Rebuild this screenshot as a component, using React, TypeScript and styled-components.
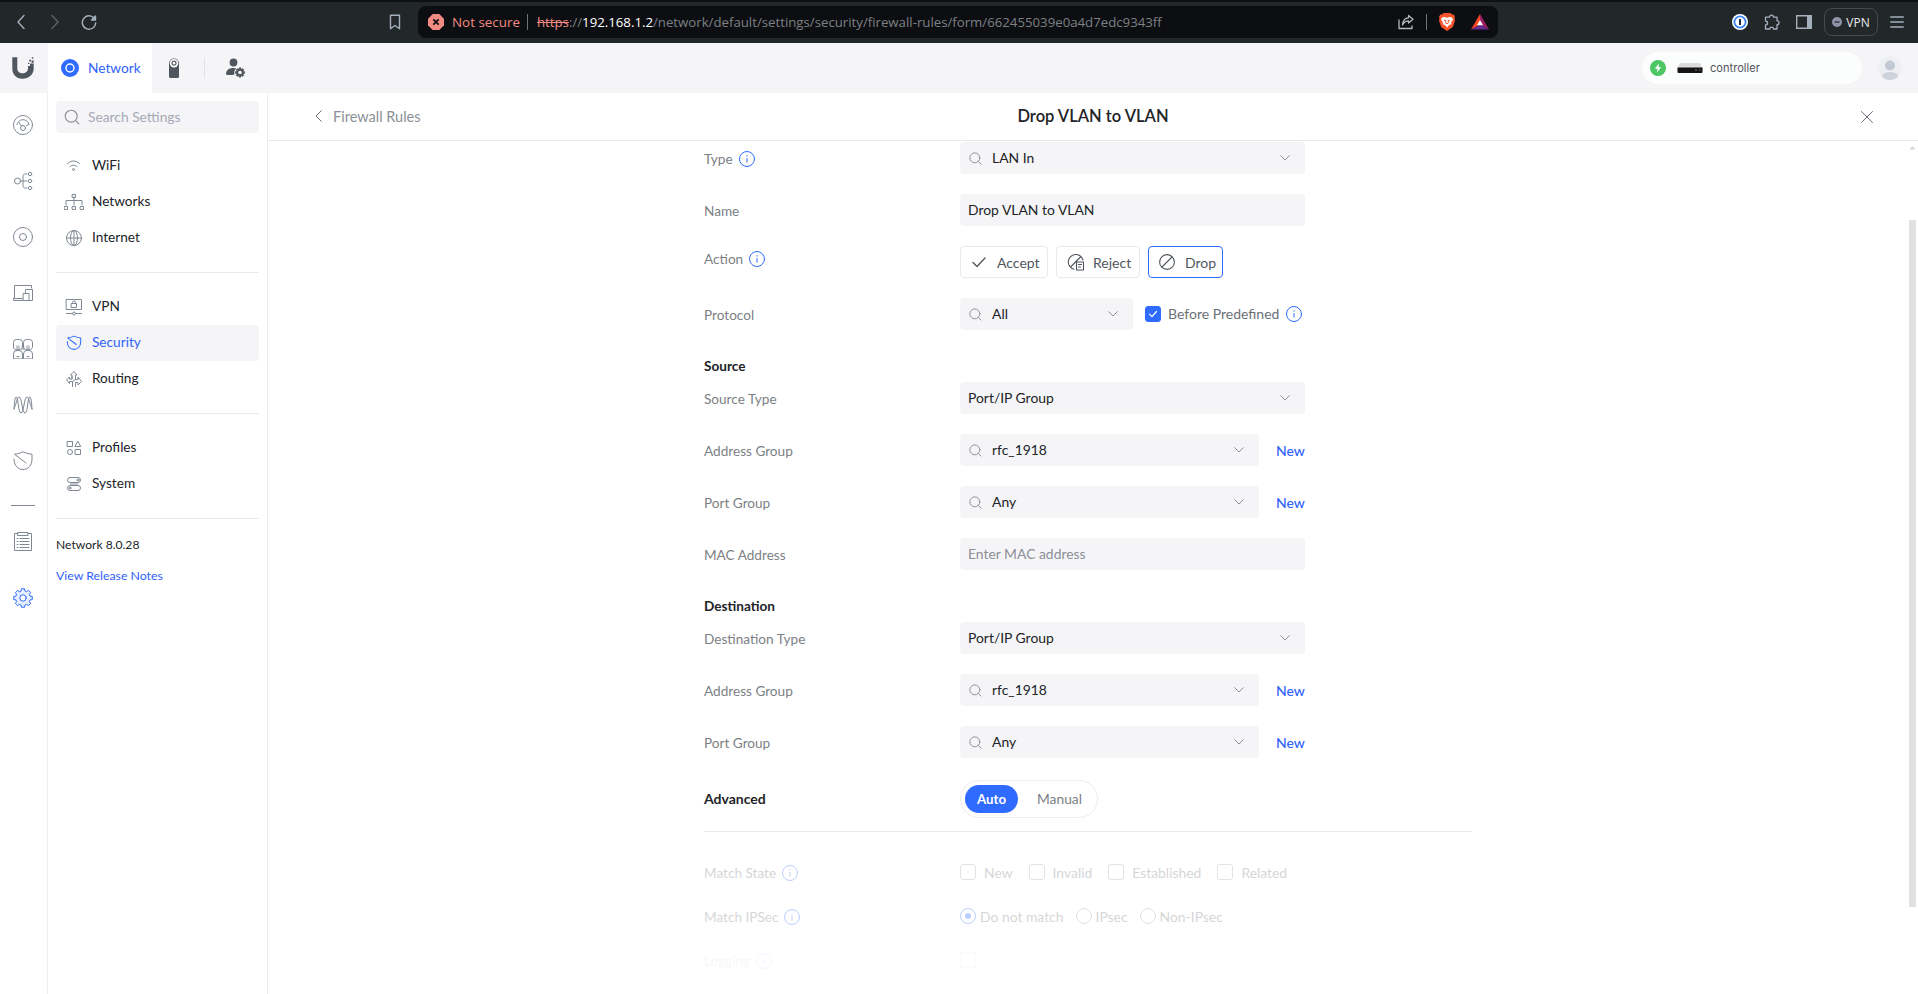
import React from 'react';
import styled, { createGlobalStyle, css } from 'styled-components';

const Global = createGlobalStyle`
  *, *::before, *::after { box-sizing: border-box; }
  html, body { margin: 0; height: 100%; overflow: hidden; background: #fff; }
  body { font-family: Lato, "Liberation Sans", sans-serif; font-size: 14px; color: #212327; }
  button { font: inherit; }
  svg { display: block; flex: none; }
`;

const Page = styled.div`
  width: 1918px;
  height: 994px;
  display: flex;
  flex-direction: column;
  overflow: hidden;
`;

/* Browser chrome */
const BrowserBar = styled.div`
  height: 43px;
  flex: none;
  display: flex;
  align-items: center;
  background: #22272a;
  border-top: 2px solid #0f1014;
  padding: 0 13px 1px 13px;
  font-family: "Open Sans", "Noto Sans", sans-serif;
  color: #a3b0bc;
`;
const NavGroup = styled.div`
  display: flex;
  align-items: center;
  gap: 18px;
  width: 390px;
  flex: none;
`;
const BookmarkSlot = styled.div`
  margin-left: auto;
  margin-right: 2px;
`;
const UrlBar = styled.div`
  width: 1080px;
  flex: none;
  height: 32px;
  margin-left: 15px;
  border-radius: 8px;
  background: #0d0e12;
  display: flex;
  align-items: center;
  padding: 0 9px 0 10px;
  font-size: 13.4px;
  white-space: nowrap;
`;
const NotSecure = styled.span`
  color: #f28b82;
  margin-left: 8px;
  padding-bottom: 1px;
  width: 68px;
`;
const UrlSep = styled.span<{ $ml: number; $mr: number }>`
  width: 1px;
  height: 16px;
  background: #6f7378;
  margin: 0 ${p => p.$mr}px 0 ${p => p.$ml}px;
`;
const UrlText = styled.span`
  color: #7d8085;
  font-size: 13.22px;
  padding-bottom: 1px;
  s { color: #f28b82; }
  b { color: #fff; font-weight: 400; }
`;
const UrlActions = styled.div`
  margin-left: auto;
  display: flex;
  align-items: center;
`;
const BatIcon = styled.svg`
  margin-left: 16px;
`;
const Extensions = styled.div`
  margin-left: auto;
  display: flex;
  align-items: center;
`;
const ExtensionIcons = styled.div`
  display: flex;
  align-items: center;
  gap: 16px;
`;
const VpnButton = styled.div`
  width: 54px;
  height: 28px;
  margin: 0 12px 0 12px;
  border: 1px solid #454a4f;
  border-radius: 8px;
  display: flex;
  align-items: center;
  justify-content: center;
  gap: 4px;
  font-size: 12px;
  color: #e8eaed;
`;

/* App header */
const AppHeader = styled.header`
  height: 50px;
  flex: none;
  display: flex;
  align-items: center;
  background: #f5f5f8;
`;
const LogoSlot = styled.div`
  width: 48px;
  padding-left: 11px;
`;
const AppTab = styled.div`
  width: 104px;
  height: 50px;
  background: #fff;
  display: flex;
  align-items: center;
  padding-left: 13px;
  gap: 9px;
  font-size: 13.7px;
  color: #2f62fb;
`;
const ConsoleIcon = styled.svg`
  margin-left: 16px;
`;
const HeaderSep = styled.span`
  width: 1px;
  height: 20px;
  background: #e2e2e8;
  margin: 0 21px 0 24px;
`;
const ConsolePill = styled.div`
  margin-left: auto;
  width: 220px;
  height: 32px;
  border-radius: 16px;
  background: #fcfdfd;
  display: flex;
  align-items: center;
  padding-left: 8px;
  font-family: Inter, sans-serif;
  font-size: 11.1px;
  color: #50565e;
`;
const GatewayIcon = styled.svg`
  margin-left: 11px;
`;
const ConsoleName = styled.span`
  margin-left: 7px;
`;
const AvatarSlot = styled.div`
  margin: 0 16px;
`;

/* Body */
const Body = styled.div`
  flex: 1;
  display: flex;
  min-height: 0;
`;
const Rail = styled.nav`
  width: 48px;
  border-right: 1px solid #ededf0;
  display: flex;
  flex-direction: column;
  align-items: center;
  padding: 22px 1px 0 0;
  gap: 36px;
  color: #808893;
`;
const RailSep = styled.span`
  width: 24px;
  height: 1px;
  background: #808893;
  margin: -2px 0 -10px;
`;
const Sidebar = styled.aside`
  width: 220px;
  border-right: 1px solid #ededf0;
  padding: 8px 8px 0 8px;
`;
const ItemText = styled.span`
  padding-bottom: 1.5px;
`;
const SearchBox = styled.div`
  height: 32px;
  border-radius: 4px;
  background: #f5f5f8;
  display: flex;
  align-items: center;
  gap: 7px;
  padding-left: 7px;
  color: #a5a9b5;
  margin-bottom: 15px;
  font-size: 13.8px;
`;
const MenuGroup = styled.div`
  padding-bottom: 16px;
  margin-bottom: 16px;
  border-bottom: 1px solid #e9e9ed;
`;
const MenuItem = styled.div<{ $active?: boolean }>`
  height: 36px;
  border-radius: 4px;
  display: flex;
  align-items: center;
  gap: 8px;
  padding-left: 8px;
  font-size: 13.65px;
  ${p => p.$active && css`background: #f5f5f8; color: #2f62fb;`}
  svg { color: ${p => (p.$active ? '#2f6bff' : '#808893')}; }
`;
const VersionText = styled.div`
  font-size: 12.1px;
  line-height: 16px;
  padding-top: 2px;
`;
const ReleaseLink = styled.a`
  display: block;
  margin-top: 15px;
  font-size: 12.3px;
  line-height: 16px;
  color: #2f62fb;
`;

const Main = styled.main`
  flex: 1;
  display: flex;
  flex-direction: column;
  min-width: 0;
`;
const MainHeader = styled.div`
  height: 48px;
  flex: none;
  border-bottom: 1px solid #e9e9ed;
  display: grid;
  grid-template-columns: 1fr auto 1fr;
  align-items: center;
  padding: 0 45px;
`;
const BackLink = styled.a`
  display: flex;
  align-items: center;
  gap: 11px;
  color: #8b8f97;
  font-size: 14.5px;
  padding: 0 0 1px 2px;
`;
const Title = styled.h1`
  margin: 0;
  padding-bottom: 1px;
  font-size: 16.5px;
  font-weight: 600;
`;
const CloseSlot = styled.div`
  justify-self: end;
  color: #70757d;
`;
const ScrollArea = styled.div`
  flex: 1;
  min-height: 0;
  display: flex;
`;
const FormPane = styled.div`
  flex: 1;
  display: flex;
  justify-content: center;
  overflow: hidden;
`;
const Form = styled.div`
  width: 768px;
  padding-top: 1px;
`;
const ScrollTrack = styled.div`
  width: 10px;
  padding: 5px 0 0 1px;
  display: flex;
  flex-direction: column;
  align-items: flex-start;
`;
const ScrollThumb = styled.div`
  width: 7px;
  height: 687px;
  margin-top: 70px;
  background: #e1e1e1;
`;

const Row = styled.div<{ $gap?: number }>`
  display: flex;
  height: 32px;
  margin-bottom: ${p => p.$gap ?? 20}px;
`;
const Label = styled.div<{ $top?: number; $bottom?: number }>`
  width: 256px;
  display: flex;
  align-items: center;
  gap: 6px;
  color: #7c7f85;
  font-size: 13.6px;
  padding-top: ${p => p.$top ?? 2}px;
  padding-bottom: ${p => p.$bottom ?? 0}px;
`;
const Field = styled.div<{ $w?: number }>`
  width: ${p => p.$w ?? 345}px;
  height: 32px;
  border-radius: 4px;
  background: #f5f5f8;
  display: flex;
  align-items: center;
  padding: 0 15px 0 8px;
`;
const FieldValue = styled.span<{ $placeholder?: boolean; $icon?: boolean }>`
  flex: 1;
  margin-left: ${p => (p.$icon ? 9 : 0)}px;
  padding-bottom: 2px;
  font-size: 13.9px;
  color: ${p => (p.$placeholder ? '#8b8f97' : '#212327')};
`;
const NewLink = styled.a`
  margin-left: 17px;
  align-self: center;
  color: #2f62fb;
  font-weight: 500;
`;
const SectionTitle = styled.div`
  height: 16px;
  line-height: 16px;
  margin: 28px 0 8px;
  font-weight: 700;
  font-size: 13.6px;
`;
const ActionButton = styled.button<{ $w: number; $active?: boolean }>`
  width: ${p => p.$w}px;
  height: 32px;
  margin-right: 8px;
  padding: 0 0 0 10px;
  border: 1px solid ${p => (p.$active ? '#2f6bff' : '#e9e9ed')};
  border-radius: 4px;
  background: #fff;
  color: #50565e;
  display: flex;
  align-items: center;
  gap: ${p => (p.$w === 84 ? 8 : 10)}px;
`;
const Before = styled.div`
  display: flex;
  align-items: center;
  margin-left: 12px;
  color: #6a6f77;
  padding-bottom: 1px;
  gap: 7px;
`;
const CheckBox = styled.span<{ $on?: boolean }>`
  width: 16px;
  height: 16px;
  flex: none;
  border-radius: 3px;
  border: 1px solid ${p => (p.$on ? '#2f6bff' : '#a5a9b0')};
  background: ${p => (p.$on ? '#2f6bff' : '#fff')};
  display: flex;
  align-items: center;
  justify-content: center;
`;
const AdvancedRow = styled.div`
  display: flex;
  align-items: center;
  height: 52px;
  margin-top: 22px;
  padding-bottom: 14px;
  border-bottom: 1px solid #e9e9ed;
`;
const AdvancedLabel = styled.div`
  width: 256px;
  font-weight: 700;
  font-size: 14px;
`;
const Segmented = styled.div`
  width: 138px;
  height: 38px;
  border: 1px solid #ededf0;
  border-radius: 19px;
  display: flex;
  align-items: center;
  padding-left: 4px;
`;
const Segment = styled.span<{ $on?: boolean }>`
  width: ${p => (p.$on ? 53 : 79)}px;
  flex: none;
  height: 28px;
  border-radius: 14px;
  display: flex;
  align-items: center;
  justify-content: center;
  padding-left: ${p => (p.$on ? 0 : 4)}px;
  color: ${p => (p.$on ? '#fff' : '#7c7f85')};
  background: ${p => (p.$on ? '#2f6bff' : 'transparent')};
  font-size: ${p => (p.$on ? 13.3 : 13.8)}px;
  font-weight: ${p => (p.$on ? 700 : 400)};
`;
const Disabled = styled.div<{ $o: number }>`
  height: 44px;
  display: flex;
  align-items: center;
  opacity: ${p => p.$o};
`;
const DisabledGroup = styled.div`
  padding-top: 18px;
`;
const Options = styled.div<{ $gap: number }>`
  display: flex;
  align-items: center;
  gap: ${p => p.$gap}px;
  color: #7c7f85;
  font-size: 13.9px;
`;
const Option = styled.span<{ $gap: number }>`
  display: flex;
  align-items: center;
  gap: ${p => p.$gap}px;
`;
const Radio = styled.span<{ $on?: boolean }>`
  width: 16px;
  height: 16px;
  border-radius: 50%;
  border: 1px solid ${p => (p.$on ? '#2f6bff' : '#a5a9b0')};
  display: flex;
  align-items: center;
  justify-content: center;
  &::after {
    content: '';
    width: 6px;
    height: 6px;
    border-radius: 50%;
    background: ${p => (p.$on ? '#2f6bff' : 'transparent')};
  }
`;

type IconProps = { w?: number; h?: number; vb?: string; sw?: number; color?: string; children: React.ReactNode };
const Icon = ({ w = 20, h, vb, sw = 1, color, children }: IconProps) => (
  <svg width={w} height={h ?? w} viewBox={vb ?? `0 0 ${w} ${h ?? w}`} fill="none" stroke="currentColor"
    strokeWidth={sw} color={color} strokeLinecap="round" strokeLinejoin="round">{children}</svg>
);

const InfoIcon = () => (
  <Icon w={16} color="#2f6bff">
    <circle cx="8" cy="8" r="7.5" />
    <path d="M8 7v4.5" strokeLinecap="butt" />
    <circle cx="8" cy="4.9" r=".7" fill="currentColor" stroke="none" />
  </Icon>
);
const Magnifier = ({ size = 15 }: { size?: number }) => (
  <Icon w={size} vb="0 0 16 16" color="#8b8f97">
    <circle cx="7.3" cy="7.3" r="5.3" />
    <path d="M11.2 11.2 14 14" />
  </Icon>
);
const Chevron = () => (
  <Icon w={10} h={6} color="#8b8f97"><path d="M.7.7 5 5 9.3.7" /></Icon>
);
const Shield = ({ size = 20 }: { size?: number }) => (
  <Icon w={size} vb="0 0 20 20" sw={20 / size}>
    <path d="M1 8c0 6.500 4 10.500 9 10.500s9-4 9-10.500V3.200C15.500 3 12.500 2 10 .8 7.500 2 4.500 3 1.500 3.200L13 12" />
  </Icon>
);

const gearPath = (() => {
  const pts: string[] = [];
  const n = 8;
  for (let i = 0; i < n; i++) {
    const a = (i * 2 * Math.PI) / n;
    [[-0.27, 7.3], [-0.17, 9.4], [0.17, 9.4], [0.27, 7.3]].forEach(([d, r]) => {
      pts.push(`${(10 + r * Math.sin(a + d)).toFixed(2)} ${(10 - r * Math.cos(a + d)).toFixed(2)}`);
    });
  }
  return `M${pts.join('L')}Z`;
})();

const SelectField = ({ value, w, search = true }: { value: string; w?: number; search?: boolean }) => (
  <Field $w={w}>
    {search && <Magnifier />}
    <FieldValue $icon={search}>{value}</FieldValue>
    <Chevron />
  </Field>
);

const GroupRow = ({ label, value, last }: { label: string; value: string; last?: boolean }) => (
  <Row $gap={last ? 0 : 20}>
    <Label>{label}</Label>
    <SelectField value={value} w={299} />
    <NewLink>New</NewLink>
  </Row>
);

const Browser = () => (
  <BrowserBar>
    <NavGroup>
      <Icon w={16} sw={1.4}><path d="M11 1.500 5 8l6 6.500" /></Icon>
      <Icon w={16} sw={1.4} color="#5c6268"><path d="M5 1.500 11 8l-6 6.500" /></Icon>
      <Icon w={16} sw={1.4}>
        <path d="M14 5.500A6.700 6.700 0 1 0 14.700 9" /><path d="M14.500 2v4h-4z" fill="currentColor" />
      </Icon>
      <BookmarkSlot>
        <Icon w={12} h={16} sw={1.400}><path d="M1.500 1.200h9v13.500L6 11.500l-4.500 3.200z" /></Icon>
      </BookmarkSlot>
    </NavGroup>
    <UrlBar>
      <svg width="16" height="16" viewBox="0 0 16 16">
        <path d="M4.700 0h6.600L16 4.700v6.600L11.300 16H4.700L0 11.300V4.700z" fill="#f28b82" />
        <path d="M5.300 5.300l5.400 5.400M10.700 5.300l-5.400 5.400" stroke="#0d0e12" strokeWidth="1.700" />
      </svg>
      <NotSecure>Not secure</NotSecure>
      <UrlSep $ml={7} $mr={9} />
      <UrlText><s>https</s>://<b>192.168.1.2</b>/network/default/settings/security/firewall-rules/form/662455039e0a4d7edc9343ff</UrlText>
      <UrlActions>
        <Icon w={16} sw={1.3} color="#b4b8bc">
          <path d="M1 6v8.500h13V12M10.500 1.500 15 5.300l-4.500 3.700V6.800C8 6.800 5.800 8 4.500 11 4.800 6.500 7 4 10.500 3.800z" />
        </Icon>
        <UrlSep $ml={12} $mr={12} />
        <svg width="16" height="18" viewBox="0 0 16 18">
          <path d="M4.500 0h7l1.500 1.600 1.700-.2L16 4l-.6 1.500.6 2-2.200 6.500L8 18l-5.800-4L0 7.500l.6-2L0 4l1.300-2.600 1.700.2z" fill="#fb542b" />
          <path d="M3 4.500 5.500 4 8 4.800 10.500 4l2.500.5 1 2-2 3 .5 1.500L9.800 12.300 8 14.500l-1.800-2.200L3.500 11 4 9.500l-2-3z" fill="#fff" />
          <path d="M5 7l2 .8-.5 2L8 10.800l1.500-1L9 7.800l2-.8" fill="none" stroke="#fb542b" />
        </svg>
        <BatIcon width="18" height="16" viewBox="0 0 18 16">
          <path d="M9 0 0 15.500l9-5z" fill="#ff4724" /><path d="M9 0l9 15.500-9-5z" fill="#9e1f63" />
          <path d="M0 15.500h18l-9-5z" fill="#662d91" /><path d="M9 6l3 5.200H6z" fill="#fff" />
        </BatIcon>
      </UrlActions>
    </UrlBar>
    <Extensions>
      <ExtensionIcons>
        <svg width="16" height="16" viewBox="0 0 16 16">
          <circle cx="8" cy="8" r="8" fill="#fff" /><circle cx="8" cy="8" r="5.600" fill="#fff" stroke="#3b82f6" strokeWidth="1.800" />
          <path d="M8 5v6" stroke="#1a2b4a" strokeWidth="2" />
        </svg>
        <Icon w={16} sw={1.300} color="#a3b0bc">
          <path d="M1.500 3.200H5.500a2 2 0 0 1 4 0H13v3.500a2 2 0 0 1 0 4V15H9.500a1.800 1.800 0 0 0-3.600 0H1.500v-4a2 2 0 0 0 0-4z" />
        </Icon>
        <svg width="16" height="16" viewBox="0 0 16 16">
          <path d="M.7 1.700h14.600v12.600H.7z" fill="none" stroke="#a3b0bc" strokeWidth="1.400" /><path d="M11 1h5v14h-5z" fill="#a3b0bc" />
        </svg>
      </ExtensionIcons>
      <VpnButton>
        <svg width="10" height="10" viewBox="0 0 10 10"><circle cx="5" cy="5" r="5" fill="#8f92a8" /><path d="M2.500 5h5" stroke="#22272a" strokeWidth="1.200" /></svg>
        VPN
      </VpnButton>
      <Icon w={15} h={14} sw={1.300}><path d="M.7 2h12.600M.7 7h12.600M.7 12h12.600" /></Icon>
    </Extensions>
  </BrowserBar>
);

const Header = () => (
  <AppHeader>
    <LogoSlot>
      <svg width="24" height="24" viewBox="0 0 24 24" fill="#50565e">
        <path d="M1.300 1.300h5v11c0 3.200 2.200 5 5.200 5s5.500-1.800 5.500-5V10h2V7.500h3.700v5c0 6-4.700 10.200-11.200 10.200s-10.200-4.200-10.200-10.200z" />
        <path d="M17 6.800h1.300v1.300H17zM18.300 3.800h1.800v1.800h-1.800zM20.600 4.600h2.100v2.200h-2.100zM20.800 1.300h1.500v1.500h-1.500z" />
      </svg>
    </LogoSlot>
    <AppTab>
      <svg width="18" height="18" viewBox="0 0 18 18">
        <circle cx="9" cy="9" r="9" fill="#2f6bff" /><circle cx="9" cy="9" r="4" fill="none" stroke="#fff" strokeWidth="1.400" />
      </svg>
      <ItemText>Network</ItemText>
    </AppTab>
    <ConsoleIcon width="12" height="20" viewBox="0 0 12 20">
      <path d="M1 5.500a5 5 0 0 1 10 0V18.500q0 1.500-1.500 1.500h-7q-1.500 0-1.500-1.500z" fill="#50565e" />
      <circle cx="6" cy="5.200" r="4.200" fill="#fff" /><circle cx="6" cy="5.200" r="2" fill="none" stroke="#50565e" strokeWidth="1.200" />
    </ConsoleIcon>
    <HeaderSep />
    <svg width="20" height="20" viewBox="0 0 20 20" fill="#50565e">
      <circle cx="7.500" cy="4.500" r="3.900" /><path d="M0 16.500c0-4.500 3-6.500 7.500-6.500 1.200 0 2 .2 2.800.5A5.500 5.500 0 0 0 8.500 16.500q-4 1-8.500 0z" />
      <g transform="translate(9 9.500) scale(.5)"><path d={gearPath} stroke="#50565e" strokeWidth="1.500" /><circle cx="10" cy="10" r="3.600" fill="#f5f5f8" /></g>
    </svg>
    <ConsolePill>
      <svg width="16" height="16" viewBox="0 0 16 16"><circle cx="8" cy="8" r="8" fill="#4cc764" /><path d="M9 3.500 4.800 8.700h2.700L7 12.500l4.200-5.200H8.500z" fill="#fff" /></svg>
      <GatewayIcon width="26" height="12" viewBox="0 0 26 12">
        <path d="M3 1h20l2.500 5H.5z" fill="#dcdcdc" /><path d="M.5 5.500h25V10q0 1-1 1h-23q-1 0-1-1z" fill="#141414" /><path d="M18 8h2M22 8h1.500" stroke="#777" />
      </GatewayIcon>
      <ConsoleName>controller</ConsoleName>
    </ConsolePill>
    <AvatarSlot>
      <svg width="24" height="24" viewBox="0 0 24 24">
        <circle cx="12" cy="12" r="12" fill="#eeeff2" /><circle cx="12" cy="9.500" r="5" fill="#c3c9d4" />
        <path d="M3.500 20c1.500-3 4.500-4 8.500-4s7 1 8.500 4A12 12 0 0 1 12 24a12 12 0 0 1-8.500-4z" fill="#cdd2dc" />
      </svg>
    </AvatarSlot>
  </AppHeader>
);

const SideRail = () => (
  <Rail>
    <Icon><circle cx="10" cy="10" r="9.500" /><circle cx="10" cy="13" r="2.500" /><path d="M8.500 11 6 7.500M4 9.500c1-3.500 3.500-4.800 6-4.800s5 1.300 6 4.800l-2.500 1" /></Icon>
    <Icon><circle cx="4.500" cy="10" r="3" /><path d="M7.500 10H14M14 3h-1.500c-2 0-2.500 1-2.500 2.500v9c0 1.500.5 2.500 2.500 2.500H14" /><circle cx="17" cy="3" r="1.700" /><circle cx="17" cy="10" r="1.700" /><circle cx="17" cy="17" r="1.700" /></Icon>
    <Icon><circle cx="10" cy="10" r="9.500" /><circle cx="10" cy="10" r="3.500" /></Icon>
    <Icon><path d="M1.500 15V2.500h17V5M.5 15.500h9M.5 15.500v2h9M12.500 10V6.500h7v11h-3.500M10.500 10.500H16v7h-5.500z" /></Icon>
    <Icon>
      <path d="M3 6.500h4v4H3zM13 6.500h4v4h-4zM8.500 7h3v4h-3z" fill="#c4c8ce" stroke="none" />
      <path d="M.5 8.500V3.500a3 3 0 0 1 3-3h3a3 3 0 0 1 3 3V8.500l-2 2.200h-5zM10.500 8.500V3.500a3 3 0 0 1 3-3h3a3 3 0 0 1 3 3V8.500l-2 2.200h-5z" />
      <path d="M.5 19.500V15a3.500 3.500 0 0 1 3.500-3.500h2A3.500 3.500 0 0 1 9.500 15v4.500zM10.500 19.500V15a3.500 3.500 0 0 1 3.500-3.500h2a3.500 3.500 0 0 1 3.500 3.500v4.500zM4 17.500h2M14 17.500h2" />
    </Icon>
    <Icon><path d="M1 14C1.500 6 2 2 3.200 2 5.500 2 5 18 8 18s3-16 6-16c2 0 2 5 5 12M19 14c-.5-8-1-12-2.200-12-2.300 0-1.800 16-4.800 16S9 2 6 2C4 2 4 7 1 14" /></Icon>
    <Shield />
    <RailSep />
    <Icon><path d="M5 1.500H1.500v17h17v-17H15M5 .5h10v3H5zM4 6.500h1M7 6.500h9M4 9.500h1M7 9.500h9M4 12.500h1M7 12.500h9M4 15.500h1M7 15.500h9" /></Icon>
    <Icon color="#2f6bff"><path d={gearPath} fill="#e6eeff" /><circle cx="10" cy="10" r="3.200" fill="#fff" /></Icon>
  </Rail>
);

const SettingsMenu = () => (
  <Sidebar>
    <SearchBox><Magnifier size={18} /><ItemText>Search Settings</ItemText></SearchBox>
    <MenuGroup>
      <MenuItem><Icon><path d="M3.500 7.500q6-5.500 12 0M6 10.500q3.500-3 7 0" /><circle cx="9.500" cy="13.500" r="1" /></Icon><ItemText>WiFi</ItemText></MenuItem>
      <MenuItem><Icon><path d="M10 5v8M2 13V8.500h16V13" /><path d="M8.500 2.500h3v3h-3zM.5 14.500h3v3h-3zM8.500 14.500h3v3h-3zM16.500 14.500h3v3h-3z" /></Icon><ItemText>Networks</ItemText></MenuItem>
      <MenuItem><Icon><circle cx="10" cy="10" r="7.500" /><ellipse cx="10" cy="10" rx="3.500" ry="7.500" /><path d="M10 2.500v15M2.500 10h15" /></Icon><ItemText>Internet</ItemText></MenuItem>
    </MenuGroup>
    <MenuGroup>
      <MenuItem><Icon><path d="M2.500 2.500h15v10h-15zM2.500 16.500h5.500M12 16.500h5.500M7.500 6.500h5v4h-5zM8.500 6.500V5.500a1.500 1.500 0 0 1 3 0v1" /><circle cx="10" cy="16.500" r="1.500" /></Icon><ItemText>VPN</ItemText></MenuItem>
      <MenuItem $active><Icon><g transform="translate(2.500 2.500) scale(.75)" strokeWidth="1.400"><path d="M1 8c0 6.500 4 10.500 9 10.500s9-4 9-10.500V3.200C15.500 3 12.500 2 10 .8 7.500 2 4.500 3 1.500 3.200L13 12" /></g></Icon><ItemText>Security</ItemText></MenuItem>
      <MenuItem><Icon><path d="M8.500 17.500V12.500H5.500v2l-3-3.500 3-3v2h2.500V6H6.500L10 2.500 13 6h-1.500v4.500H14v-2.500l3.500 4.500-3.500 3.500v-2.500h-2.500v4M8 10v-2.500M11.500 10.500 8.500 12.500" /></Icon><ItemText>Routing</ItemText></MenuItem>
    </MenuGroup>
    <MenuGroup>
      <MenuItem><Icon><path d="M3.500 3.500h5v5h-5zM11.500 11.500h5v5h-5zM14 3.500l2.700 5h-5.400z" /><circle cx="6" cy="14" r="2.500" /></Icon><ItemText>Profiles</ItemText></MenuItem>
      <MenuItem><Icon><rect x="3.500" y="3.500" width="13" height="5" rx="2.500" /><rect x="3.500" y="11.500" width="13" height="5" rx="2.500" /><circle cx="14" cy="6" r="1" /><circle cx="6" cy="14" r="1" /><path d="M6 9h8v2H6z" fill="#c4c8ce" stroke="none" /></Icon><ItemText>System</ItemText></MenuItem>
    </MenuGroup>
    <VersionText>Network 8.0.28</VersionText>
    <ReleaseLink>View Release Notes</ReleaseLink>
  </Sidebar>
);

export default function App() {
  return (
    <Page>
      <Global />
      <Browser />
      <Header />
      <Body>
        <SideRail />
        <SettingsMenu />
        <Main>
          <MainHeader>
            <BackLink><Icon w={7} h={12} color="#70757d"><path d="M6.300.7 1 6l5.300 5.300" /></Icon>Firewall Rules</BackLink>
            <Title>Drop VLAN to VLAN</Title>
            <CloseSlot><Icon w={12}><path d="M.5.500l11 11M11.500.500l-11 11" /></Icon></CloseSlot>
          </MainHeader>
          <ScrollArea>
            <FormPane>
              <Form>
                <Row><Label>Type<InfoIcon /></Label><SelectField value="LAN In" /></Row>
                <Row><Label>Name</Label><Field><FieldValue>Drop VLAN to VLAN</FieldValue></Field></Row>
                <Row>
                  <Label $top={0} $bottom={7}>Action<InfoIcon /></Label>
                  <ActionButton $w={88}><Icon w={16} sw={1.300}><path d="M2 8.500 6 12.500 14 4" /></Icon>Accept</ActionButton>
                  <ActionButton $w={84}><Icon w={18} sw={1.100}><path d="M7 16.300A7.500 7.500 0 1 1 16 7M3.500 14 14 3.500M9.500 9h7v8h-7zM11.500 11.500h3M11.500 14h2" /></Icon>Reject</ActionButton>
                  <ActionButton $w={75} $active><Icon w={16} sw={1.100}><circle cx="8" cy="8" r="7.400" /><path d="M3 13 13 3" /></Icon>Drop</ActionButton>
                </Row>
                <Row $gap={0}>
                  <Label>Protocol</Label>
                  <SelectField value="All" w={173} />
                  <Before>
                    <CheckBox $on><Icon w={10} color="#fff" sw={1.200}><path d="M1.500 5.200 4 7.700 8.500 2.500" /></Icon></CheckBox>
                    Before Predefined<InfoIcon />
                  </Before>
                </Row>

                <SectionTitle>Source</SectionTitle>
                <Row><Label>Source Type</Label><SelectField value="Port/IP Group" search={false} /></Row>
                <GroupRow label="Address Group" value="rfc_1918" />
                <GroupRow label="Port Group" value="Any" />
                <Row $gap={0}><Label>MAC Address</Label><Field><FieldValue $placeholder>Enter MAC address</FieldValue></Field></Row>

                <SectionTitle>Destination</SectionTitle>
                <Row><Label>Destination Type</Label><SelectField value="Port/IP Group" search={false} /></Row>
                <GroupRow label="Address Group" value="rfc_1918" />
                <GroupRow label="Port Group" value="Any" last />

                <AdvancedRow>
                  <AdvancedLabel>Advanced</AdvancedLabel>
                  <Segmented><Segment $on>Auto</Segment><Segment>Manual</Segment></Segmented>
                </AdvancedRow>
                <DisabledGroup>
                  <Disabled $o={0.32}>
                    <Label>Match State<InfoIcon /></Label>
                    <Options $gap={16}>
                      {['New', 'Invalid', 'Established', 'Related'].map(o => <Option key={o} $gap={8}><CheckBox />{o}</Option>)}
                    </Options>
                  </Disabled>
                  <Disabled $o={0.32}>
                    <Label>Match IPSec<InfoIcon /></Label>
                    <Options $gap={12}>
                      {['Do not match', 'IPsec', 'Non-IPsec'].map((o, i) => <Option key={o} $gap={4}><Radio $on={i === 0} />{o}</Option>)}
                    </Options>
                  </Disabled>
                  <Disabled $o={0.06}>
                    <Label>Logging<InfoIcon /></Label>
                    <CheckBox />
                  </Disabled>
                </DisabledGroup>
              </Form>
            </FormPane>
            <ScrollTrack>
              <svg width="7" height="4" viewBox="0 0 7 4"><path d="M3.500 0l3 3.500H.5z" fill="#d5d6da" /></svg>
              <ScrollThumb />
            </ScrollTrack>
          </ScrollArea>
        </Main>
      </Body>
    </Page>
  );
}
